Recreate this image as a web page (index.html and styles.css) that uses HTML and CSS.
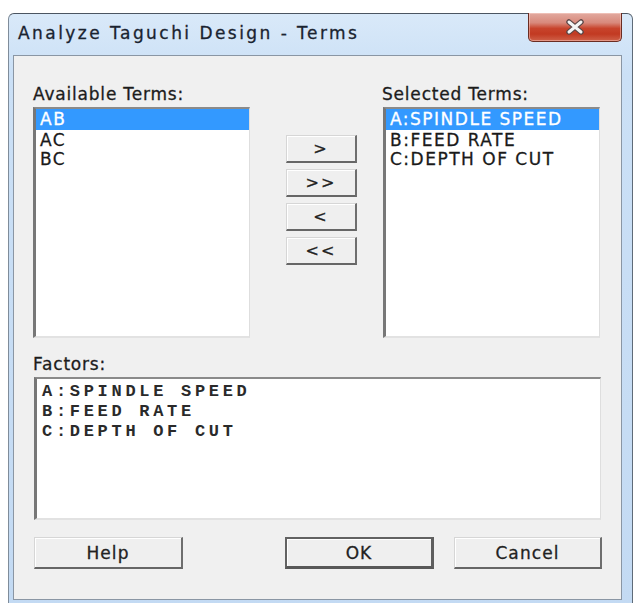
FILE: index.html
```html
<!DOCTYPE html>
<html lang="en">
<head>
<meta charset="utf-8">
<title>Analyze Taguchi Design - Terms</title>
<link rel="stylesheet" href="styles.css">
</head>
<body>
<div class="window">
  <div class="titlebar">
    <span class="title">Analyze Taguchi Design - Terms</span>
    <button class="close" type="button" aria-label="Close">
      <svg width="22" height="16" viewBox="0 0 22 16" aria-hidden="true">
        <path d="M5 3 L17 13 M17 3 L5 13" stroke="#5a4646" stroke-width="5.5" stroke-linecap="round" fill="none"/>
        <path d="M5 3 L17 13 M17 3 L5 13" stroke="#f4f4f4" stroke-width="3" stroke-linecap="round" fill="none"/>
      </svg>
    </button>
  </div>
  <div class="client">
    <div class="terms">
      <div class="col">
        <div class="label">Available Terms:</div>
        <ul class="listbox">
          <li class="selected">AB</li>
          <li>AC</li>
          <li>BC</li>
        </ul>
      </div>
      <div class="movers">
        <button class="btn mover" type="button">&gt;</button>
        <button class="btn mover" type="button">&gt;&gt;</button>
        <button class="btn mover" type="button">&lt;</button>
        <button class="btn mover" type="button">&lt;&lt;</button>
      </div>
      <div class="col col-right">
        <div class="label">Selected Terms:</div>
        <ul class="listbox">
          <li class="selected">A:SPINDLE SPEED</li>
          <li>B:FEED RATE</li>
          <li>C:DEPTH OF CUT</li>
        </ul>
      </div>
    </div>
    <div class="label factors-label">Factors:</div>
    <div class="factors">
      <div class="line">A:SPINDLE SPEED</div>
      <div class="line">B:FEED RATE</div>
      <div class="line">C:DEPTH OF CUT</div>
    </div>
    <div class="actions">
      <button class="btn action" type="button">Help</button>
      <button class="btn action default ok" type="button">OK</button>
      <button class="btn action cancel" type="button">Cancel</button>
    </div>
  </div>
</div>
</body>
</html>
```

FILE: styles.css
```css
* {
  box-sizing: border-box;
}

html, body {
  margin: 0;
  padding: 0;
  background: #ffffff;
  overflow: hidden;
  width: 637px;
  height: 603px;
}

body {
  font-family: "DejaVu Sans", "Liberation Sans", sans-serif;
  font-size: 17px;
  color: #1c1c1c;
  -webkit-text-stroke: 0.3px currentColor;
}

/* window frame */
.window {
  margin: 13px 0 0 8px;
  width: 625px;
  height: 600px;
  background: linear-gradient(to bottom, #d9e9f9 0px, #cbe0f6 60px, #c3daf3 100%);
  border-top: 1px solid #4b5561;
  border-left: 1px solid #7f8c9a;
  border-right: 1px solid #5f6b78;
  border-radius: 6px 6px 0 0;
  display: flex;
  flex-direction: column;
}

.titlebar {
  height: 41px;
  display: flex;
  align-items: flex-start;
}

.title {
  padding: 10px 0 0 9px;
  line-height: 19px;
  letter-spacing: 2.45px;
  color: #1a2330;
}

.close {
  margin: -1px 10px 0 auto;
  width: 94px;
  height: 29px;
  padding: 0;
  border: 1px solid #6a2c22;
  border-top: none;
  border-radius: 0 0 5px 5px;
  background: linear-gradient(to bottom, #e2aaa0 0%, #d8897b 35%, #c8442c 55%, #c23a22 75%, #cf6149 100%);
  display: flex;
  align-items: center;
  justify-content: center;
  box-shadow: inset 0 0 0 1px rgba(255, 220, 210, 0.45);
}

/* dialog client area */
.client {
  margin-left: 4px;
  width: 609px;
  height: 545px;
  background: #f0f0f0;
  border: 1px solid #8a96a4;
  display: flex;
  flex-direction: column;
}

.label {
  line-height: 19px;
  height: 19px;
  letter-spacing: 0.8px;
  white-space: nowrap;
}

.terms {
  display: flex;
  padding: 29px 0 0 19px;
}

.col {
  width: 217px;
  display: flex;
  flex-direction: column;
}

.col .label {
  margin-bottom: 3px;
}

.col-right {
  margin-left: 26px;
}

.col-right .label {
  margin-left: -1px;
}

.listbox {
  list-style: none;
  margin: 0;
  padding: 0;
  height: 231px;
  background: #ffffff;
  border-top: 2px solid #8a8a8a;
  border-left: 3px solid #777777;
  border-right: 1px solid #dedede;
  border-bottom: 2px solid #e2e2e2;
}

.listbox li {
  height: 19.5px;
  line-height: 20px;
  padding-left: 4px;
  letter-spacing: 1.5px;
  white-space: nowrap;
  color: #1a1a1a;
}

.listbox li.selected {
  height: 20.5px;
  background: #3399ff;
  color: #ffffff;
}

.movers {
  margin: 50px 0 0 36px;
  width: 71px;
  display: flex;
  flex-direction: column;
  gap: 6px;
}

/* raised push buttons */
.btn {
  font-family: "DejaVu Sans", "Liberation Sans", sans-serif;
  font-size: 17px;
  color: #222222;
  -webkit-text-stroke: 0.3px currentColor;
  background: #efefef;
  border-style: solid;
  border-width: 1px 2px 2px 1px;
  border-color: #d6d6d6 #6e6e6e #666666 #d6d6d6;
  box-shadow: inset 1px 1px 0 #ffffff;
  padding: 0;
  letter-spacing: 1.1px;
  display: flex;
  align-items: center;
  justify-content: center;
}

.mover {
  height: 28px;
  width: 71px;
  font-size: 16px;
  letter-spacing: 2px;
}

.factors-label {
  margin: 17px 0 0 19px;
}

.factors {
  margin: 3px 0 0 20px;
  width: 567px;
  height: 143px;
  background: #ffffff;
  border-top: 2px solid #8a8a8a;
  border-left: 3px solid #777777;
  border-right: 1px solid #dedede;
  border-bottom: 2px solid #e2e2e2;
  padding: 3px 0 0 5px;
  font-family: "Liberation Mono", "DejaVu Sans Mono", monospace;
  font-weight: bold;
  font-size: 17px;
  letter-spacing: 3.7px;
  color: #2a2a2a;
  -webkit-text-stroke: 0;
}

.factors .line {
  line-height: 20px;
  height: 20px;
  white-space: pre;
}

.actions {
  display: flex;
  margin: 17px 0 0 20px;
}

.action {
  width: 149px;
  height: 32px;
}

.ok {
  margin-left: 102px;
}

.cancel {
  margin-left: 20px;
  width: 148px;
}

.default {
  border-width: 2px 3px 3px 2px;
  border-color: #626262 #5e5e5e #585858 #626262;
  box-shadow: inset 1px 1px 0 #ffffff;
}
```
